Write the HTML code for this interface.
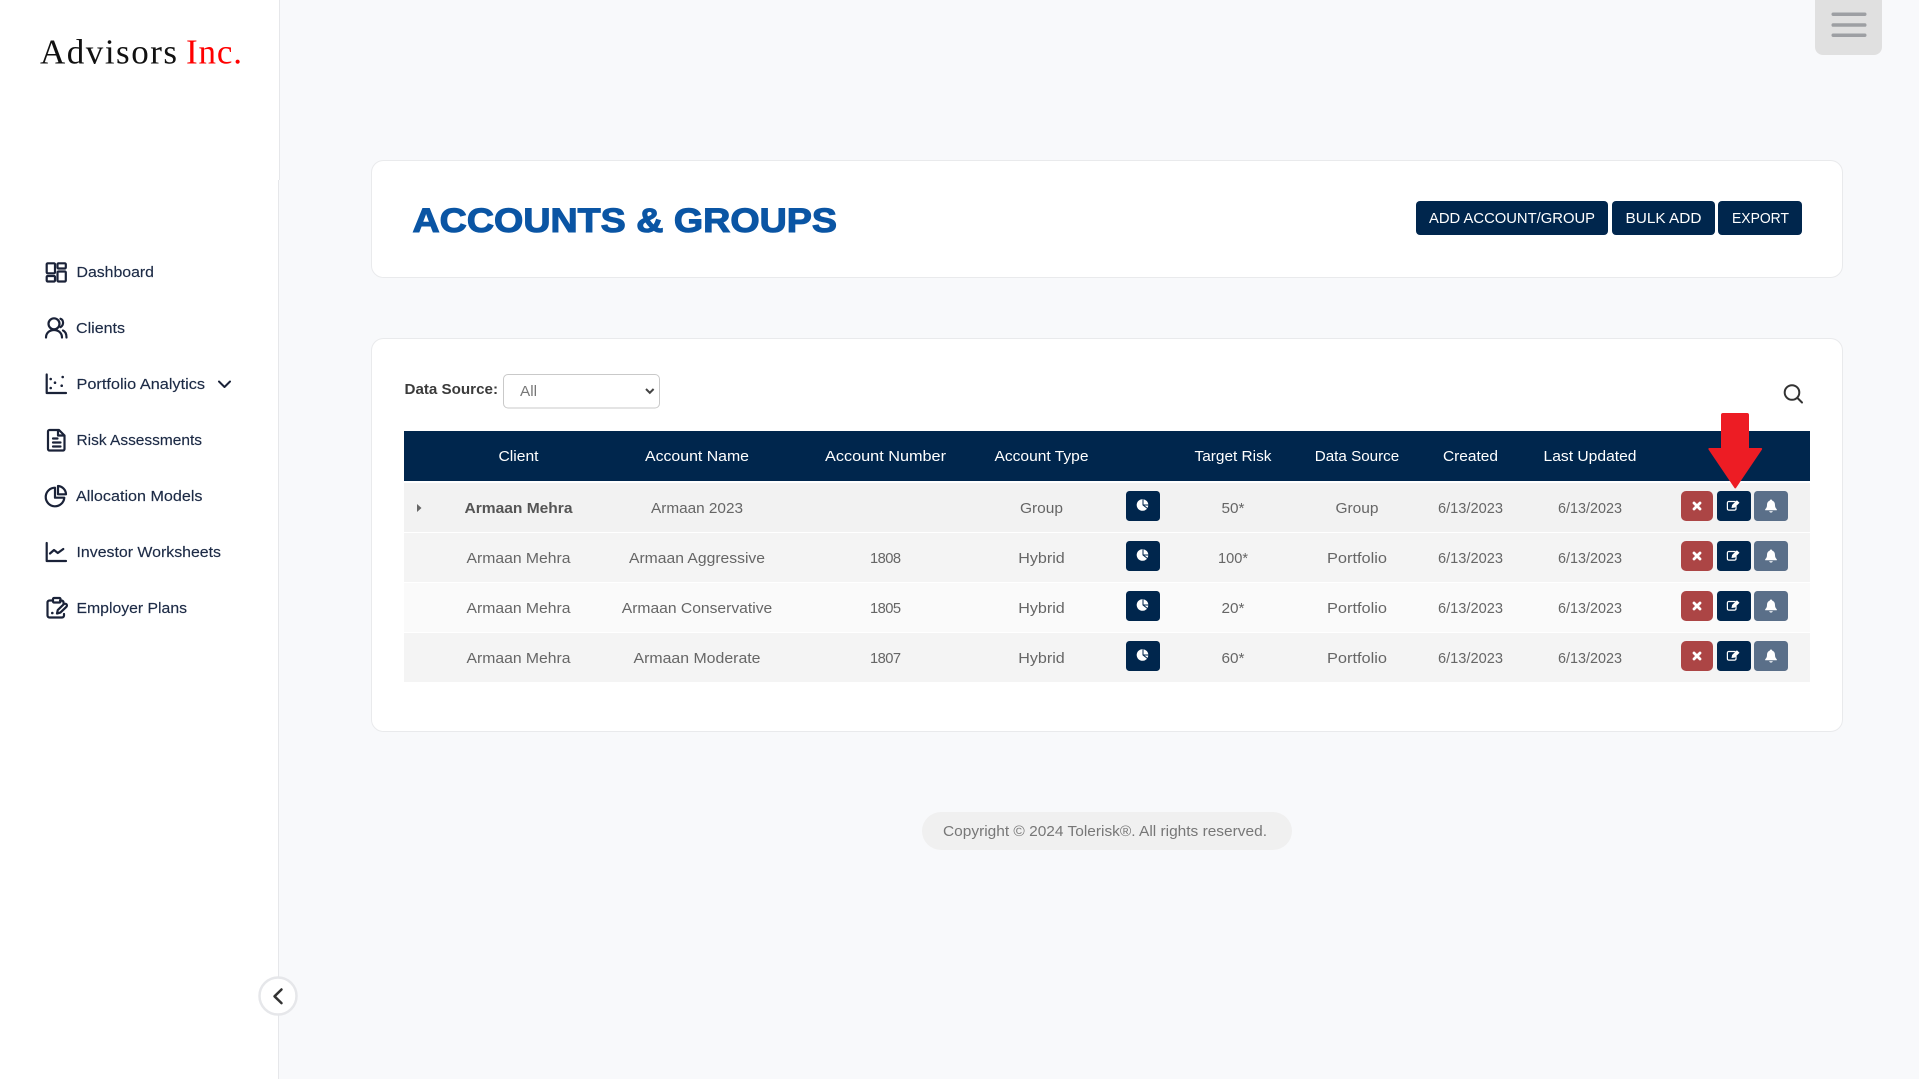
<!DOCTYPE html>
<html lang="en">
<head>
<meta charset="utf-8">
<title>Accounts &amp; Groups</title>
<style>
html,body{margin:0;padding:0;width:1919px;height:1079px;overflow:hidden;background:#f8f9fb}
svg{display:block}
text{font-family:"Liberation Sans",sans-serif;font-size:14.7px;fill:#666}
.n{fill:#1d2b46;font-size:14.7px;stroke:#1d2b46;stroke-width:.15px}
.h{fill:#fff;font-size:14.7px}
.c{text-anchor:middle}
.b{fill:#fff;font-size:14.7px;text-anchor:middle}
.ic{fill:none;stroke:#1a2238;stroke-width:2.2;stroke-linecap:round;stroke-linejoin:round}
</style>
</head>
<body>
<svg width="1919" height="1079" viewBox="0 0 1919 1079" xmlns="http://www.w3.org/2000/svg">
<defs>
<g id="rowbtns">
  <rect x="1126" y="491" width="34" height="30" rx="3.5" fill="#00264d"/>
  <circle cx="1142.5" cy="505" r="5.8" fill="#fff"/>
  <path d="M1143 499.5v5.5l4.5 3.5M1143 505h5.5" fill="none" stroke="#00264d" stroke-width="1"/>
  <rect x="1681" y="491" width="32" height="30" rx="5" fill="#ac4545"/>
  <path d="M1694 503l6 6M1700 503l-6 6" stroke="#fff" stroke-width="2.8" fill="none" stroke-linecap="round"/>
  <rect x="1717" y="491" width="34" height="30" rx="3.5" fill="#00264d"/>
  <path d="M1735.5 501.500h-6.800a1.300 1.300 0 0 0-1.300 1.300v6a1.300 1.300 0 0 0 1.300 1.300h6a1.300 1.300 0 0 0 1.300-1.300v-2.800" fill="none" stroke="#fff" stroke-width="1.200"/>
  <path d="M1731.500 508l.6-3 4.800-4.800 2.600 2.600-4.800 4.800z" fill="#fff"/>
  <rect x="1754" y="491" width="34" height="30" rx="3.500" fill="#5a6f89"/>
  <path d="M1771 499.500c.8 0 1.300.5 1.300 1.200 2 .6 2.700 2.300 2.700 4.300 0 2.200.8 3.300 1.800 4.300v.9h-11.600v-.9c1-1 1.800-2.100 1.800-4.300 0-2 .7-3.700 2.700-4.300 0-.7.5-1.200 1.300-1.200zM1769.200 511.200h3.600c-.3 1-1 1.300-1.800 1.300s-1.500-.3-1.800-1.300z" fill="#fff"/>
</g>
</defs>

<!-- page -->
<rect width="1919" height="1079" fill="#f8f9fb"/>

<!-- sidebar -->
<rect width="279" height="1079" fill="#fff"/>
<rect x="279" y="0" width="1" height="180" fill="#e6e7ea"/>
<rect x="278" y="180" width="1" height="899" fill="#e6e7ea"/>

<text x="40" y="63.500" textLength="137" lengthAdjust="spacing" style="font-family:'Liberation Serif',serif;font-size:35px;fill:#111">Advisors</text>
<text x="186" y="63.500" textLength="56" lengthAdjust="spacing" style="font-family:'Liberation Serif',serif;font-size:35px;fill:#f00">Inc.</text>

<!-- nav: dashboard -->
<g class="ic">
  <rect x="46.700" y="263.300" width="8.300" height="10" rx="1"/>
  <rect x="46.700" y="276" width="8.300" height="5.500" rx="1"/>
  <rect x="57.500" y="263.300" width="8.300" height="5.200" rx="1"/>
  <rect x="57.500" y="271.500" width="8.300" height="10" rx="1"/>
</g>
<text class="n" x="76.500" y="277" textLength="77.500" lengthAdjust="spacingAndGlyphs">Dashboard</text>

<!-- nav: clients -->
<g class="ic">
  <circle cx="54" cy="323.800" r="5.500"/>
  <path d="M46 337.500c0-4.500 3.500-7.500 8-7.500s8 3 8 7.500M60.500 318.800c3 .8 3.800 6.200 0 8.300M63 330.500c2.300 1 3.500 3.500 3.500 7"/>
</g>
<text class="n" x="76" y="333" textLength="49" lengthAdjust="spacingAndGlyphs">Clients</text>

<!-- nav: portfolio analytics -->
<g class="ic">
  <path d="M46.700 374.500V393H66"/>
</g>
<g fill="#1a2238">
  <circle cx="50.700" cy="379" r="1.300"/><circle cx="62.700" cy="377" r="1.300"/><circle cx="55" cy="382.700" r="1.300"/><circle cx="61.700" cy="385.700" r="1.300"/><circle cx="50.700" cy="388" r="1.300"/>
</g>
<text class="n" x="76.500" y="389" textLength="128.500" lengthAdjust="spacingAndGlyphs">Portfolio Analytics</text>
<path d="M219 381.500l5.500 5.500 5.500-5.500" fill="none" stroke="#1a2238" stroke-width="2" stroke-linecap="round" stroke-linejoin="round"/>

<!-- nav: risk assessments -->
<g class="ic">
  <path d="M59 430H49.500a1.500 1.500 0 0 0-1.500 1.500v17.500a1.500 1.500 0 0 0 1.500 1.500h13.500a1.500 1.500 0 0 0 1.500-1.500V435.500zM58 430v5.500h6.500M53 438.500h4.500M53 442.500h7.500M53 446.500h7.500"/>
</g>
<text class="n" x="76.500" y="445" textLength="125.500" lengthAdjust="spacingAndGlyphs">Risk Assessments</text>

<!-- nav: allocation models -->
<g class="ic">
  <path d="M55 487.700a9.300 9.300 0 1 0 9.300 10H55zM58 486a8.500 8.500 0 0 1 8 8.300h-8z"/>
</g>
<text class="n" x="76" y="501" textLength="126.500" lengthAdjust="spacingAndGlyphs">Allocation Models</text>

<!-- nav: investor worksheets -->
<g class="ic">
  <path d="M46.700 543V561H66M50 553.500l4-3.500 3.800 3 5.500-4"/>
</g>
<text class="n" x="76.500" y="557" textLength="144.500" lengthAdjust="spacingAndGlyphs">Investor Worksheets</text>

<!-- nav: employer plans -->
<g class="ic">
  <path d="M53 600.500h-3.500a2 2 0 0 0-2 2v13a2 2 0 0 0 2 2h12.500a2 2 0 0 0 2-2v-1.500M60 600.500h1.500a2 2 0 0 1 2 2v1M54 598h5.500a1 1 0 0 1 1 1v2.500a1 1 0 0 1-1 1H54a1 1 0 0 1-1-1V599a1 1 0 0 1 1-1zM57 613.500l.8-3.500 6-5.800a1.800 1.800 0 0 1 2.600 2.600l-6 5.800z"/>
</g>
<circle cx="52.300" cy="613" r="1.300" fill="#1a2238"/>
<text class="n" x="76.500" y="613" textLength="110.500" lengthAdjust="spacingAndGlyphs">Employer Plans</text>

<!-- collapse button -->
<circle cx="278" cy="996" r="18.500" fill="#fff" stroke="#e6e7ea" stroke-width="2.500"/>
<path d="M281.500 989.500l-7 6.800 7 6.800" fill="none" stroke="#333" stroke-width="2.500" stroke-linecap="round" stroke-linejoin="round"/>

<!-- hamburger -->
<path d="M1815 0h67v47a8 8 0 0 1-8 8h-51a8 8 0 0 1-8-8z" fill="#e0e0e0"/>
<g fill="#9d9fa3">
  <rect x="1831.500" y="12.500" width="35" height="3.500" rx="1.700"/>
  <rect x="1831.500" y="23.300" width="35" height="3.500" rx="1.700"/>
  <rect x="1831.500" y="33.500" width="35" height="3.500" rx="1.700"/>
</g>

<!-- header card -->
<rect x="371.500" y="160.500" width="1471" height="117" rx="12" fill="#fff" stroke="#e9eaec"/>
<text x="412.500" y="232" textLength="424.500" lengthAdjust="spacingAndGlyphs" style="font-size:34.500px;font-weight:700;fill:#0a55a4;stroke:#0a55a4;stroke-width:1.100px">ACCOUNTS &amp; GROUPS</text>

<rect x="1416" y="201" width="192" height="34" rx="4" fill="#00264d"/>
<text class="b" x="1512" y="223" textLength="166" lengthAdjust="spacingAndGlyphs">ADD ACCOUNT/GROUP</text>
<rect x="1612" y="201" width="103" height="34" rx="4" fill="#00264d"/>
<text class="b" x="1663.500" y="223" textLength="76" lengthAdjust="spacingAndGlyphs">BULK ADD</text>
<rect x="1718" y="201" width="84" height="34" rx="4" fill="#00264d"/>
<text class="b" x="1760.500" y="223" textLength="57" lengthAdjust="spacingAndGlyphs">EXPORT</text>

<!-- table card -->
<rect x="371.500" y="338.500" width="1471" height="393" rx="12" fill="#fff" stroke="#e9eaec"/>

<text x="404.500" y="394" textLength="93.500" lengthAdjust="spacingAndGlyphs" style="font-weight:700;fill:#3b3b3b">Data Source:</text>
<rect x="503.500" y="374.500" width="156" height="33.500" rx="4.500" fill="#fff" stroke="#c9c9c9"/>
<text x="520" y="396" textLength="17" lengthAdjust="spacingAndGlyphs" style="fill:#777">All</text>
<path d="M646 389l3.800 3.800 3.800-3.800" fill="none" stroke="#444" stroke-width="2"/>

<!-- search -->
<circle cx="1792" cy="392.500" r="7.300" fill="none" stroke="#333" stroke-width="2"/>
<path d="M1797.500 398l4.500 4.500" stroke="#333" stroke-width="2" stroke-linecap="round"/>

<!-- table header -->
<rect x="404" y="431" width="1406" height="50" fill="#00264d"/>
<g class="h">
<text class="h c" x="518.500" y="461" textLength="40" lengthAdjust="spacingAndGlyphs">Client</text>
<text class="h c" x="697" y="461" textLength="104" lengthAdjust="spacingAndGlyphs">Account Name</text>
<text class="h c" x="885.500" y="461" textLength="121" lengthAdjust="spacingAndGlyphs">Account Number</text>
<text class="h c" x="1041.500" y="461" textLength="94" lengthAdjust="spacingAndGlyphs">Account Type</text>
<text class="h c" x="1233" y="461" textLength="77" lengthAdjust="spacingAndGlyphs">Target Risk</text>
<text class="h c" x="1357" y="461" textLength="84.500" lengthAdjust="spacingAndGlyphs">Data Source</text>
<text class="h c" x="1470.500" y="461" textLength="55" lengthAdjust="spacingAndGlyphs">Created</text>
<text class="h c" x="1590" y="461" textLength="93" lengthAdjust="spacingAndGlyphs">Last Updated</text>
</g>

<!-- rows -->
<rect x="404" y="483" width="1406" height="49" fill="#f2f2f2"/>
<rect x="404" y="533" width="1406" height="49" fill="#f4f4f4"/>
<rect x="404" y="583" width="1406" height="49" fill="#fafafa"/>
<rect x="404" y="633" width="1406" height="49" fill="#f4f4f4"/>

<path d="M417 504l4.500 4-4.500 4z" fill="#666"/>

<use href="#rowbtns"/>
<use href="#rowbtns" y="50"/>
<use href="#rowbtns" y="100"/>
<use href="#rowbtns" y="150"/>

<!-- row 1 -->
<text class="c" x="518.500" y="513" textLength="108" lengthAdjust="spacingAndGlyphs" style="font-weight:700;fill:#555">Armaan Mehra</text>
<text class="c" x="697" y="513" textLength="92" lengthAdjust="spacingAndGlyphs">Armaan 2023</text>
<text class="c" x="1041.500" y="513" textLength="43" lengthAdjust="spacingAndGlyphs">Group</text>
<text class="c" x="1233" y="513" textLength="23" lengthAdjust="spacingAndGlyphs">50*</text>
<text class="c" x="1357" y="513" textLength="43" lengthAdjust="spacingAndGlyphs">Group</text>
<text class="c" x="1470.500" y="513" textLength="65" lengthAdjust="spacingAndGlyphs">6/13/2023</text>
<text class="c" x="1590" y="513" textLength="64" lengthAdjust="spacingAndGlyphs">6/13/2023</text>

<!-- row 2 -->
<text class="c" x="518.500" y="563" textLength="104" lengthAdjust="spacingAndGlyphs">Armaan Mehra</text>
<text class="c" x="697" y="563" textLength="136" lengthAdjust="spacingAndGlyphs">Armaan Aggressive</text>
<text class="c" x="885.500" y="563" textLength="31" lengthAdjust="spacing">1808</text>
<text class="c" x="1041.500" y="563" textLength="46.500" lengthAdjust="spacingAndGlyphs">Hybrid</text>
<text class="c" x="1233" y="563" textLength="30" lengthAdjust="spacingAndGlyphs">100*</text>
<text class="c" x="1357" y="563" textLength="60" lengthAdjust="spacingAndGlyphs">Portfolio</text>
<text class="c" x="1470.500" y="563" textLength="65" lengthAdjust="spacingAndGlyphs">6/13/2023</text>
<text class="c" x="1590" y="563" textLength="64" lengthAdjust="spacingAndGlyphs">6/13/2023</text>

<!-- row 3 -->
<text class="c" x="518.500" y="613" textLength="104" lengthAdjust="spacingAndGlyphs">Armaan Mehra</text>
<text class="c" x="697" y="613" textLength="150.500" lengthAdjust="spacingAndGlyphs">Armaan Conservative</text>
<text class="c" x="885.500" y="613" textLength="31" lengthAdjust="spacing">1805</text>
<text class="c" x="1041.500" y="613" textLength="46.500" lengthAdjust="spacingAndGlyphs">Hybrid</text>
<text class="c" x="1233" y="613" textLength="23" lengthAdjust="spacingAndGlyphs">20*</text>
<text class="c" x="1357" y="613" textLength="60" lengthAdjust="spacingAndGlyphs">Portfolio</text>
<text class="c" x="1470.500" y="613" textLength="65" lengthAdjust="spacingAndGlyphs">6/13/2023</text>
<text class="c" x="1590" y="613" textLength="64" lengthAdjust="spacingAndGlyphs">6/13/2023</text>

<!-- row 4 -->
<text class="c" x="518.500" y="663" textLength="104" lengthAdjust="spacingAndGlyphs">Armaan Mehra</text>
<text class="c" x="697" y="663" textLength="127" lengthAdjust="spacingAndGlyphs">Armaan Moderate</text>
<text class="c" x="885.500" y="663" textLength="31" lengthAdjust="spacing">1807</text>
<text class="c" x="1041.500" y="663" textLength="46.500" lengthAdjust="spacingAndGlyphs">Hybrid</text>
<text class="c" x="1233" y="663" textLength="23" lengthAdjust="spacingAndGlyphs">60*</text>
<text class="c" x="1357" y="663" textLength="60" lengthAdjust="spacingAndGlyphs">Portfolio</text>
<text class="c" x="1470.500" y="663" textLength="65" lengthAdjust="spacingAndGlyphs">6/13/2023</text>
<text class="c" x="1590" y="663" textLength="64" lengthAdjust="spacingAndGlyphs">6/13/2023</text>

<!-- red arrow annotation -->
<path d="M1721 413h26a2 2 0 0 1 2 2v33h12a1 1 0 0 1 1 1.500l-26 38.500a1 1 0 0 1-1.500 0l-26-38.500a1 1 0 0 1 1-1.500h11.500v-33a2 2 0 0 1 2-2z" fill="#ed1c24"/>

<!-- footer -->
<rect x="922" y="812" width="370" height="38" rx="19" fill="#f0f0f0"/>
<text x="943" y="836" textLength="324" lengthAdjust="spacingAndGlyphs" style="fill:#777">Copyright © 2024 Tolerisk®. All rights reserved.</text>
</svg>
</body>
</html>
